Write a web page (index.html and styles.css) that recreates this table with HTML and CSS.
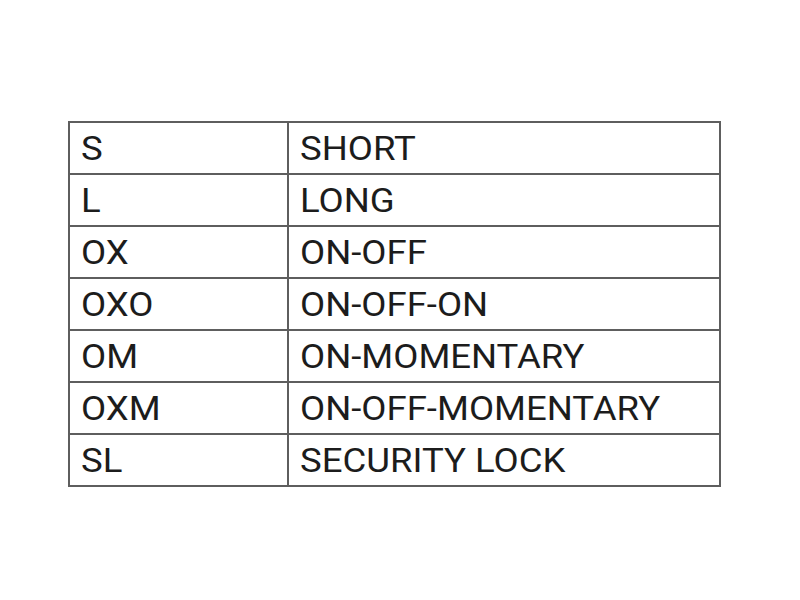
FILE: index.html
```html
<!DOCTYPE html>
<html>
<head>
<meta charset="utf-8">
<link rel="stylesheet" href="styles.css">
</head>
<body>
<table class="codes">
<tr><td class="k"><span class="t">S</span></td><td class="v"><span class="t">SHORT</span></td></tr>
<tr><td class="k"><span class="t">L</span></td><td class="v"><span class="t">LONG</span></td></tr>
<tr><td class="k"><span class="t">OX</span></td><td class="v"><span class="t">ON-OFF</span></td></tr>
<tr><td class="k"><span class="t">OXO</span></td><td class="v"><span class="t">ON-OFF-ON</span></td></tr>
<tr><td class="k"><span class="t">OM</span></td><td class="v"><span class="t">ON-MOMENTARY</span></td></tr>
<tr><td class="k"><span class="t">OXM</span></td><td class="v"><span class="t">ON-OFF-MOMENTARY</span></td></tr>
<tr><td class="k"><span class="t">SL</span></td><td class="v"><span class="t">SECURITY LOCK</span></td></tr>
</table>
</body>
</html>
```
FILE: styles.css
```css
html, body {
  margin: 0;
  background: #fff;
}
body {
  padding: 121px 0 0 68px;
  font-family: Roboto, "Liberation Sans", sans-serif;
}
.codes {
  border-collapse: collapse;
  width: 653px;
  color: #1c1c1c;
  font-size: 34px;
}
.codes td {
  border: 2px solid #5e5e5e;
  height: 50px;
  padding: 0 0 0 11px;
  box-sizing: border-box;
  line-height: 50px;
  vertical-align: middle;
  white-space: nowrap;
}
.codes td.k {
  width: 219px;
}
.t {
  display: inline-block;
  transform: scaleX(1.075);
  transform-origin: left center;
}
```
